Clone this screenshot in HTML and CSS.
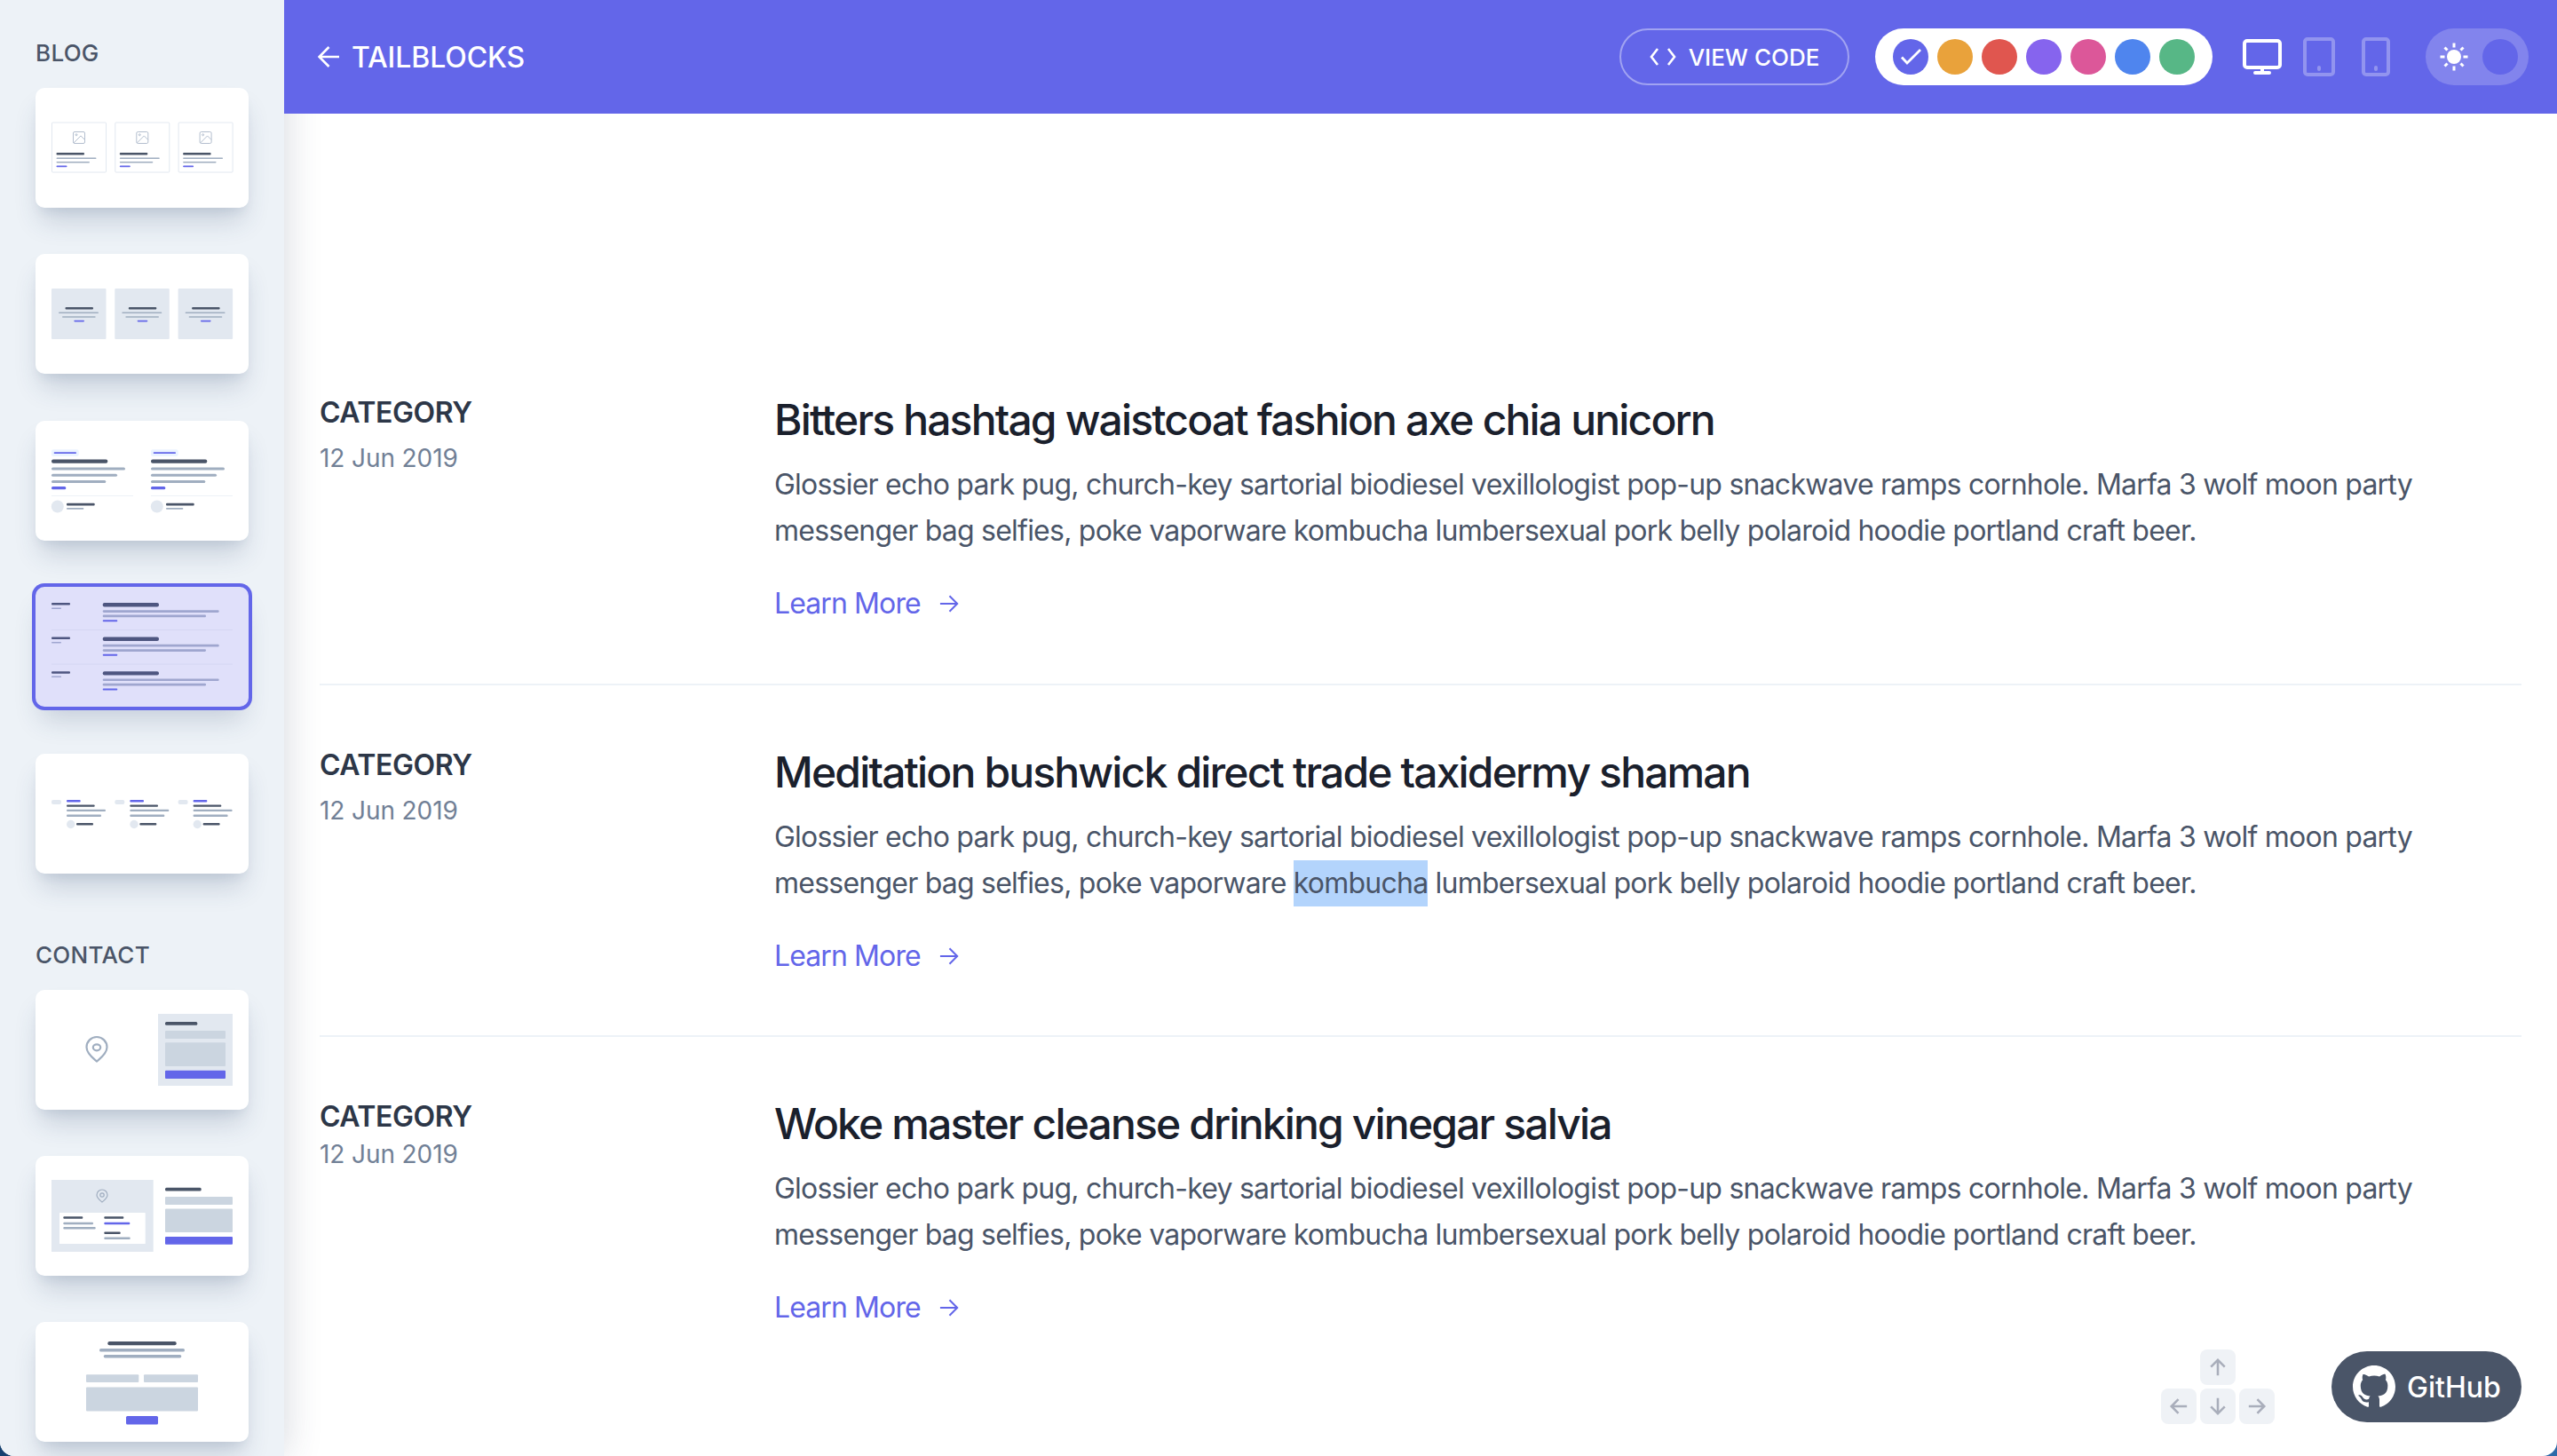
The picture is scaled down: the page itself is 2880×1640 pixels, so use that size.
FILE: index.html
```html
<!DOCTYPE html>
<html lang="en">
<head>
    <meta charset="UTF-8">
    <meta name="viewport" content="width=device-width, initial-scale=1.0">
    <title>Tailblocks</title>
    <link rel="stylesheet" href="styles.css">
</head>
<body>
    <div class="window">
        <aside class="sidebar">
            <h3 class="side-label">BLOG</h3>
            <div class="thumbs">
                <div class="thumb">
                    <svg viewBox="0 0 240 135">
                        <defs>
                            <g id="blog-a">
                                <rect class="box-line" x="18.5" y="39" width="61" height="56" rx="1"/>
                                <rect class="pic" x="42.5" y="49.5" width="13" height="13" rx="1.5"/>
                                <path class="pic" d="M43 62l8-8 4.500 4.500"/>
                                <circle class="pic" cx="46" cy="52.800" r="1"/>
                                <rect class="dark" x="23.5" y="73" width="31.5" height="2.6" rx="1"/>
                                <rect class="gray" x="23.5" y="78.5" width="45" height="1.6" rx=".8"/>
                                <rect class="gray" x="23.5" y="83" width="37.5" height="1.6" rx=".8"/>
                                <rect class="accent" x="23.5" y="87.6" width="12" height="1.6" rx=".8"/>
                            </g>
                        </defs>
                        <use href="#blog-a"/>
                        <use href="#blog-a" x="71.3"/>
                        <use href="#blog-a" x="142.6"/>
                    </svg>
                </div>
                <div class="thumb">
                    <svg viewBox="0 0 240 135">
                        <defs>
                            <g id="blog-b">
                                <rect class="light" x="18" y="39" width="61.5" height="57" rx="1"/>
                                <rect class="dark" x="33.5" y="60" width="31.5" height="2.6" rx="1"/>
                                <rect class="gray" x="26" y="65.5" width="45" height="1.6" rx=".8"/>
                                <rect class="gray" x="30" y="70.2" width="37.7" height="1.6" rx=".8"/>
                                <rect class="accent" x="43.3" y="74.8" width="11.7" height="1.6" rx=".8"/>
                            </g>
                        </defs>
                        <use href="#blog-b"/>
                        <use href="#blog-b" x="71.3"/>
                        <use href="#blog-b" x="142.6"/>
                    </svg>
                </div>
                <div class="thumb">
                    <svg viewBox="0 0 240 135">
                        <defs>
                            <g id="blog-c">
                                <rect class="tag" x="18" y="32.2" width="30.7" height="7.7" rx="2"/>
                                <rect class="accent" x="20.7" y="35.2" width="25.3" height="1.8" rx=".8"/>
                                <rect class="dark" x="18" y="43.4" width="63.3" height="4.4" rx="2"/>
                                <rect class="gray" x="18" y="52.5" width="83" height="3" rx="1.5"/>
                                <rect class="gray" x="18" y="59.8" width="74" height="3" rx="1.5"/>
                                <rect class="gray" x="18" y="67" width="61.3" height="3" rx="1.5"/>
                                <rect class="accent" x="18" y="74" width="16.3" height="3.3" rx="1.5"/>
                                <rect class="rule" x="18" y="84" width="92" height="1"/>
                                <circle class="light" cx="24.8" cy="96.5" r="7"/>
                                <rect class="dark" x="35" y="92.8" width="31.7" height="2.6" rx="1"/>
                                <rect class="gray" x="35" y="98" width="19.3" height="1.8" rx=".8"/>
                            </g>
                        </defs>
                        <use href="#blog-c"/>
                        <use href="#blog-c" x="112"/>
                    </svg>
                </div>
                <div class="thumb thumb-active">
                    <svg viewBox="0 0 240 135">
                        <defs>
                            <g id="blog-d">
                                <rect class="dark" x="18" y="18" width="21" height="2.5" rx="1"/>
                                <rect class="gray" x="18" y="23.4" width="11" height="1.5" rx=".7"/>
                                <rect class="dark" x="75.7" y="18" width="63.3" height="4.4" rx="2"/>
                                <rect class="gray" x="75.7" y="26.2" width="131" height="2.7" rx="1.3"/>
                                <rect class="gray" x="75.7" y="31.6" width="116.3" height="2.7" rx="1.3"/>
                                <rect class="accent" x="75.7" y="37.2" width="16.6" height="2" rx="1"/>
                            </g>
                        </defs>
                        <use href="#blog-d"/>
                        <rect class="rule" x="18" y="48" width="204" height="1"/>
                        <use href="#blog-d" y="38.6"/>
                        <rect class="rule" x="18" y="86.6" width="204" height="1"/>
                        <use href="#blog-d" y="77.2"/>
                    </svg>
                </div>
                <div class="thumb">
                    <svg viewBox="0 0 240 135">
                        <defs>
                            <g id="blog-e">
                                <rect class="light" x="18" y="52" width="11" height="5" rx="2"/>
                                <rect class="accent" x="35" y="52" width="15.7" height="2.4" rx="1"/>
                                <rect class="dark" x="35" y="57.4" width="31.7" height="2.4" rx="1"/>
                                <rect class="gray" x="35" y="62.7" width="44" height="2.4" rx="1"/>
                                <rect class="gray" x="35" y="68.5" width="39" height="2.4" rx="1"/>
                                <circle class="light" cx="39.7" cy="79.5" r="4.7"/>
                                <rect class="dark" x="46" y="78" width="19" height="2.6" rx="1"/>
                            </g>
                        </defs>
                        <use href="#blog-e"/>
                        <use href="#blog-e" x="71.3"/>
                        <use href="#blog-e" x="142.6"/>
                    </svg>
                </div>
            </div>

            <h3 class="side-label contact-label">CONTACT</h3>
            <div class="thumbs">
                <div class="thumb">
                    <svg viewBox="0 0 240 135">
                        <path class="pin" d="M69 80.5c-3.5-3.2-11.5-8.500-11.500-16a11.500 11.500 0 0 1 23 0c0 7.500-8 12.800-11.500 16z"/>
                        <ellipse class="pin" cx="69" cy="64.800" rx="4.200" ry="3.500"/>
                        <rect class="light" x="138" y="27" width="84" height="81"/>
                        <rect class="dark" x="146" y="36" width="36.300" height="3.800" rx="1.500"/>
                        <rect class="field" x="146" y="46" width="68" height="9" rx="1"/>
                        <rect class="field" x="146" y="59.300" width="68" height="26.700" rx="1"/>
                        <rect class="accent" x="146" y="90.700" width="68" height="9.300" rx="1"/>
                    </svg>
                </div>
                <div class="thumb">
                    <svg viewBox="0 0 240 135">
                        <rect class="light" x="18" y="27" width="114.700" height="81"/>
                        <path class="pin pin-small" d="M75 52c-1.800-1.600-6-4.200-6-8a6 6 0 0 1 12 0c0 3.800-4.200 6.400-6 8z"/>
                        <circle class="pin pin-small" cx="75" cy="44" r="2.200"/>
                        <rect class="paper" x="27" y="64" width="96.700" height="35" rx=".5"/>
                        <rect class="dark" x="31.300" y="68.300" width="22" height="2.400" rx="1"/>
                        <rect class="gray" x="31.300" y="74.800" width="33.700" height="2.400" rx="1"/>
                        <rect class="gray" x="31.300" y="80" width="36.400" height="2.400" rx="1"/>
                        <rect class="dark" x="77.300" y="68.300" width="22" height="2.400" rx="1"/>
                        <rect class="accent" x="77.300" y="74.800" width="29" height="2.400" rx="1"/>
                        <rect class="dark" x="77.300" y="85.500" width="18.400" height="2.400" rx="1"/>
                        <rect class="gray" x="77.300" y="91.600" width="29.400" height="2.400" rx="1"/>
                        <rect class="dark" x="146" y="35.700" width="40.700" height="3.800" rx="1.500"/>
                        <rect class="field" x="146" y="46" width="76" height="9" rx="1"/>
                        <rect class="field" x="146" y="59.500" width="76" height="26.500" rx="1"/>
                        <rect class="accent" x="146" y="91" width="76" height="8.700" rx="1"/>
                    </svg>
                </div>
                <div class="thumb">
                    <svg viewBox="0 0 240 135">
                        <rect class="dark" x="81.300" y="22" width="77.400" height="4.300" rx="2"/>
                        <rect class="gray" x="72" y="30.100" width="96" height="3.500" rx="1.700"/>
                        <rect class="gray" x="76.700" y="37" width="87.600" height="3.500" rx="1.700"/>
                        <rect class="field" x="57" y="59.200" width="59.300" height="8.800" rx="1"/>
                        <rect class="field" x="122" y="59.200" width="61" height="8.800" rx="1"/>
                        <rect class="field" x="57" y="73.400" width="126" height="27.200" rx="1"/>
                        <rect class="accent" x="102" y="106" width="36" height="9.500" rx="1.500"/>
                    </svg>
                </div>
            </div>
        </aside>

        <div class="page">
            <header class="topbar">
                <a class="back" href="#">
                    <svg class="back-arrow" viewBox="0 0 24 24"><path d="M24 12H1.500M12.500 1L1.500 12l11 11"/></svg>
                    TAILBLOCKS
                </a>
                <a class="view-code" href="#">
                    <svg class="code-icon" viewBox="0 0 30 20"><path d="M9 1L2 10l7 9M21 1l7 9-7 9"/></svg>
                    VIEW CODE
                </a>
                <div class="swatches">
                    <span class="swatch swatch-indigo">
                        <svg viewBox="0 0 40 40"><path d="M10 20.500l6 6.500 15-15"/></svg>
                    </span>
                    <span class="swatch swatch-orange"></span>
                    <span class="swatch swatch-red"></span>
                    <span class="swatch swatch-purple"></span>
                    <span class="swatch swatch-pink"></span>
                    <span class="swatch swatch-blue"></span>
                    <span class="swatch swatch-green"></span>
                </div>
                <svg class="device device-desktop" viewBox="0 0 44 40">
                    <rect x="2" y="2" width="40" height="30" rx="3"/>
                    <path d="M22 32v6M14 38h16"/>
                </svg>
                <svg class="device device-tablet" viewBox="0 0 36 44">
                    <rect x="2" y="2" width="32" height="40" rx="3"/>
                    <path d="M18 34v2"/>
                </svg>
                <svg class="device device-phone" viewBox="0 0 32 44">
                    <rect x="2" y="2" width="28" height="40" rx="3"/>
                    <path d="M16 34v2"/>
                </svg>
                <div class="toggle">
                    <svg class="sun" viewBox="0 0 32 32">
                        <circle class="sun-disc" cx="16" cy="16" r="8"/>
                        <path d="M16 0.500v5M16 26.500v5M0.500 16h5M26.500 16h5M5.500 5.500l3 3M23.500 23.500l3 3M5.500 26.500l3-3M23.500 8.500l3-3"/>
                    </svg>
                    <span class="knob"></span>
                </div>
            </header>

            <main class="content">
                <article class="post">
                    <div class="post-meta">
                        <span class="post-cat">CATEGORY</span>
                        <span class="post-date">12 Jun 2019</span>
                    </div>
                    <div class="post-body">
                        <h2 class="post-title">Bitters hashtag waistcoat fashion axe chia unicorn</h2>
                        <p class="post-text">Glossier echo park pug, church-key sartorial biodiesel vexillologist pop-up snackwave ramps cornhole. Marfa 3 wolf moon party messenger bag selfies, poke vaporware kombucha lumbersexual pork belly polaroid hoodie portland craft beer.</p>
                        <a class="learn" href="#">Learn More
                            <svg viewBox="0 0 24 24"><path d="M1 12h21M12.500 2.500L22 12l-9.500 9.500"/></svg>
                        </a>
                    </div>
                </article>
                <article class="post">
                    <div class="post-meta">
                        <span class="post-cat">CATEGORY</span>
                        <span class="post-date">12 Jun 2019</span>
                    </div>
                    <div class="post-body">
                        <h2 class="post-title">Meditation bushwick direct trade taxidermy shaman</h2>
                        <p class="post-text">Glossier echo park pug, church-key sartorial biodiesel vexillologist pop-up snackwave ramps cornhole. Marfa 3 wolf moon party messenger bag selfies, poke vaporware <span class="selected">kombucha</span> lumbersexual pork belly polaroid hoodie portland craft beer.</p>
                        <a class="learn" href="#">Learn More
                            <svg viewBox="0 0 24 24"><path d="M1 12h21M12.500 2.500L22 12l-9.500 9.500"/></svg>
                        </a>
                    </div>
                </article>
                <article class="post post-last">
                    <div class="post-meta">
                        <span class="post-cat">CATEGORY</span>
                        <span class="post-date">12 Jun 2019</span>
                    </div>
                    <div class="post-body">
                        <h2 class="post-title">Woke master cleanse drinking vinegar salvia</h2>
                        <p class="post-text">Glossier echo park pug, church-key sartorial biodiesel vexillologist pop-up snackwave ramps cornhole. Marfa 3 wolf moon party messenger bag selfies, poke vaporware kombucha lumbersexual pork belly polaroid hoodie portland craft beer.</p>
                        <a class="learn" href="#">Learn More
                            <svg viewBox="0 0 24 24"><path d="M1 12h21M12.500 2.500L22 12l-9.500 9.500"/></svg>
                        </a>
                    </div>
                </article>
            </main>

            <div class="keys">
                <span class="key key-up"><svg viewBox="0 0 24 24"><path d="M12 22V3M3.500 11.500L12 3l8.500 8.500"/></svg></span>
                <span class="key key-left"><svg viewBox="0 0 24 24"><path d="M22 12H3M11.500 3.500L3 12l8.500 8.500"/></svg></span>
                <span class="key key-down"><svg viewBox="0 0 24 24"><path d="M12 2v19M3.500 12.500L12 21l8.500-8.500"/></svg></span>
                <span class="key key-right"><svg viewBox="0 0 24 24"><path d="M2 12h19M12.500 3.500L21 12l-8.500 8.500"/></svg></span>
            </div>
            <a class="github" href="#">
                <svg viewBox="0 0 16 16"><path d="M8 0C3.580 0 0 3.580 0 8c0 3.540 2.290 6.530 5.470 7.590.4.070.55-.17.55-.38 0-.19-.01-.82-.01-1.490-2.010.37-2.530-.49-2.690-.94-.09-.23-.48-.94-.82-1.130-.28-.15-.68-.52-.01-.53.63-.01 1.080.58 1.230.82.72 1.210 1.870.87 2.330.66.07-.52.28-.87.51-1.070-1.780-.2-3.640-.89-3.640-3.950 0-.87.31-1.590.82-2.150-.08-.2-.36-1.020.08-2.120 0 0 .67-.21 2.200.82.64-.18 1.320-.27 2-.27s1.360.09 2 .27c1.530-1.040 2.200-.82 2.200-.82.44 1.100.16 1.920.08 2.120.51.56.82 1.270.82 2.150 0 3.070-1.870 3.750-3.650 3.950.29.25.54.73.54 1.480 0 1.070-.01 1.930-.01 2.200 0 .21.15.46.55.38A8.010 8.010 0 0 0 16 8c0-4.420-3.580-8-8-8z"/></svg>
                GitHub
            </a>
        </div>
    </div>
</body>
</html>
```

FILE: styles.css
```css
* {
    box-sizing: border-box;
}

html, body {
    margin: 0;
    height: 100%;
}

body {
    background: linear-gradient(90deg, #17406f 0%, #2d6aa8 100%);
    font-family: 'Inter', sans-serif;
    overflow: hidden;
}

a {
    text-decoration: none;
}

.window {
    display: flex;
    width: 2880px;
    height: 1640px;
    overflow: hidden;
    border-radius: 0 0 16px 16px;
    background: white;
    position: relative;
}

/* Sidebar */
.sidebar {
    width: 320px;
    flex-shrink: 0;
    padding: 48px 40px 0;
    background-color: #edf2f7;
    box-shadow: 0 0 40px rgba(45, 60, 90, 0.2);
    position: relative;
    z-index: 2;
    overflow: hidden;
}

.side-label {
    margin: 0 0 27px;
    font-size: 26px;
    line-height: 24px;
    font-weight: 500;
    color: #4a5568;
    letter-spacing: 0.3px;
}

.contact-label {
    margin-top: 80px;
}

.thumbs {
    display: flex;
    flex-direction: column;
    gap: 52.4px;
}

.thumb {
    width: 240px;
    height: 135px;
    background: white;
    border-radius: 10px;
    box-shadow: 0 20px 30px -6px rgba(40, 65, 105, 0.2), 0 8px 12px -4px rgba(40, 65, 105, 0.08);
}

.thumb svg {
    display: block;
    width: 240px;
    height: 135px;
}

.thumb-active {
    background: #e0e0fa;
    box-shadow: 0 0 0 4px #6366e9, 0 20px 30px -6px rgba(40, 65, 105, 0.2);
}

.dark { fill: #4a5568; }
.gray { fill: #a0aec0; }
.light { fill: #e2e8f0; }
.field { fill: #cbd5e0; }
.accent { fill: #6366e9; }
.rule { fill: #edf2f7; }
.tag { fill: #ebf4ff; }
.paper { fill: white; }
.box-line { fill: none; stroke: #e2e8f0; stroke-width: 1; }
.pic { fill: none; stroke: #b4bfcf; stroke-width: 1; }
.pin { fill: none; stroke: #a0aec0; stroke-width: 2.2; }
.pin-small { stroke-width: 1.2; }

.thumb-active .dark { fill: #4e5680; }
.thumb-active .gray { fill: #9fa6cf; }
.thumb-active .rule { fill: #d5d6f2; }

/* Header */
.page {
    flex: 1;
    min-width: 0;
    position: relative;
}

.topbar {
    height: 128px;
    display: flex;
    align-items: center;
    padding: 0 32px 0 38px;
    background-color: #6366e9;
    position: relative;
    z-index: 3;
}

.back {
    display: flex;
    align-items: center;
    gap: 14px;
    margin-right: auto;
    color: white;
    font-size: 32px;
    font-weight: 500;
    letter-spacing: -0.1px;
}

.back-arrow {
    width: 24px;
    height: 24px;
    fill: none;
    stroke: white;
    stroke-width: 2.6;
}

.view-code {
    display: flex;
    align-items: center;
    justify-content: center;
    gap: 14px;
    width: 259px;
    height: 64px;
    margin-right: 29px;
    border: 2px solid rgba(255, 255, 255, 0.4);
    border-radius: 32px;
    color: white;
    font-size: 26px;
    font-weight: 500;
}

.code-icon {
    width: 30px;
    height: 20px;
    fill: none;
    stroke: white;
    stroke-width: 2.6;
}

.swatches {
    display: flex;
    align-items: center;
    gap: 10px;
    height: 64px;
    padding: 0 20px;
    margin-right: 34px;
    border-radius: 32px;
    background: white;
}

.swatch {
    width: 40px;
    height: 40px;
    border-radius: 50%;
}

.swatch svg {
    display: block;
    fill: none;
    stroke: white;
    stroke-width: 2.8;
}

.swatch-indigo { background: #6366e9; }
.swatch-orange { background: #e9a23b; }
.swatch-red { background: #e0564f; }
.swatch-purple { background: #8664ee; }
.swatch-pink { background: #dc5799; }
.swatch-blue { background: #4f85ee; }
.swatch-green { background: #57b786; }

.device {
    fill: none;
    stroke: white;
    stroke-width: 4;
    stroke-linecap: round;
}

.device-desktop {
    width: 44px;
    height: 40px;
    margin-right: 24px;
}

.device-tablet {
    width: 36px;
    height: 44px;
    margin-right: 30px;
    opacity: 0.3;
}

.device-phone {
    width: 32px;
    height: 44px;
    margin-right: 40px;
    opacity: 0.3;
}

.toggle {
    display: flex;
    align-items: center;
    justify-content: space-between;
    width: 116px;
    height: 64px;
    padding: 0 12px 0 16px;
    border-radius: 32px;
    background: rgba(255, 255, 255, 0.2);
}

.sun {
    width: 32px;
    height: 32px;
    fill: none;
    stroke: white;
    stroke-width: 3;
}

.sun-disc {
    fill: white;
    stroke: none;
}

.knob {
    width: 40px;
    height: 40px;
    border-radius: 50%;
    background: #6366e9;
}

/* Posts */
.content {
    padding: 0 40px;
    margin-top: 245px;
}

.post {
    display: flex;
    padding: 65px 0 64px;
    height: 396.5px;
    border-top: 2px solid #edf2f7;
}

.post:first-child {
    border-top-color: transparent;
}

.post-meta {
    display: flex;
    flex-direction: column;
    width: 512px;
    flex-shrink: 0;
    padding-top: 1px;
}

.post-cat {
    font-size: 32px;
    line-height: 48px;
    font-weight: 600;
    color: #2d3748;
    letter-spacing: -0.45px;
}

.post-date {
    font-size: 28px;
    line-height: 42px;
    color: #718096;
    margin-top: 6px;
    letter-spacing: -0.1px;
}

.post-last .post-date {
    margin-top: -3px;
}

.post-title {
    margin: 0 0 14px;
    font-size: 48px;
    line-height: 66px;
    font-weight: 500;
    color: #1a202c;
    letter-spacing: -1.84px;
}

.post-text {
    margin: 0 0 32px;
    font-size: 32px;
    line-height: 52px;
    color: #4a5568;
    letter-spacing: -0.77px;
}

.selected {
    display: inline-block;
    background: #b3d4fc;
}

.learn {
    display: inline-flex;
    align-items: center;
    gap: 21px;
    font-size: 32px;
    line-height: 48px;
    color: #6366e9;
    letter-spacing: -0.9px;
}

.learn svg {
    width: 22px;
    height: 22px;
    fill: none;
    stroke: #6366e9;
    stroke-width: 2.2;
}

/* Overlays */
.keys {
    position: absolute;
    left: 2114px;
    top: 1520px;
    display: grid;
    grid-template-columns: repeat(3, 40px);
    grid-template-rows: repeat(2, 40px);
    gap: 4px;
    z-index: 4;
}

.key {
    display: flex;
    align-items: center;
    justify-content: center;
    border-radius: 8px;
    background: #eff2f6;
}

.key svg {
    width: 22px;
    height: 22px;
    fill: none;
    stroke: #a9aebb;
    stroke-width: 2.8;
}

.key-up {
    grid-column: 2;
    grid-row: 1;
}

.key-left {
    grid-column: 1;
    grid-row: 2;
}

.key-down {
    grid-column: 2;
    grid-row: 2;
}

.key-right {
    grid-column: 3;
    grid-row: 2;
}

.github {
    position: absolute;
    left: 2306px;
    top: 1522px;
    display: flex;
    align-items: center;
    gap: 13px;
    width: 214px;
    height: 80px;
    padding-left: 24px;
    border-radius: 40px;
    background: #4a5568;
    color: white;
    font-size: 32px;
    font-weight: 500;
    z-index: 4;
}

.github svg {
    width: 48px;
    height: 48px;
    fill: white;
}
```
